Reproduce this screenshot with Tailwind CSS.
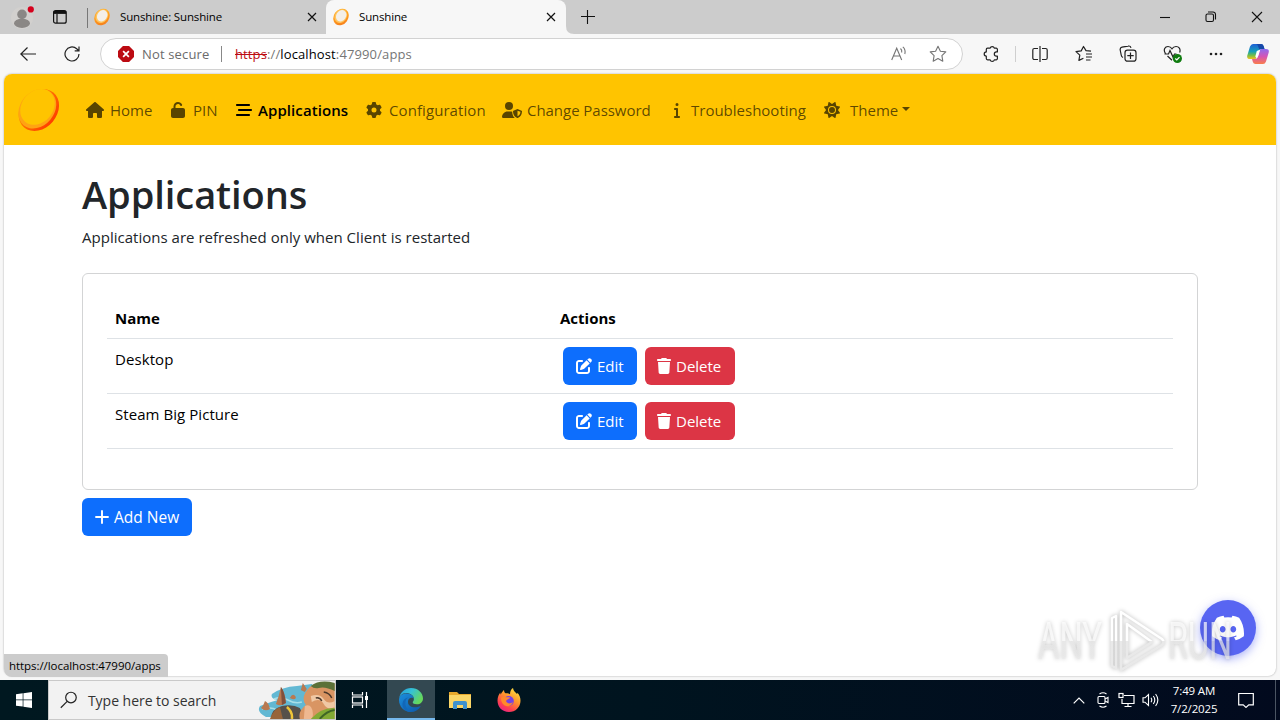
<!DOCTYPE html>
<html lang="en">
<head>
  <meta charset="UTF-8">
  <meta name="viewport" content="width=device-width, initial-scale=1.0">
  <title>Sunshine</title>
  <script src="https://cdn.jsdelivr.net/npm/@tailwindcss/browser@4"></script>
  <style>
    body {
      font-family: 'Open Sans', 'Noto Sans', sans-serif;
    }
  </style>
</head>
<body class="w-[1280px] h-[720px] overflow-hidden flex flex-col bg-[#f7f7f7] text-[15px] text-black">

  <!-- Shared icons -->
  <svg class="absolute w-0 h-0">
    <defs>
      <linearGradient id="sunRim" x1="0" y1="0" x2="1" y2="1">
        <stop offset="0" stop-color="#ffb52b"/><stop offset=".55" stop-color="#ff9a1e"/><stop offset="1" stop-color="#f2741b"/>
      </linearGradient>
      <linearGradient id="logoRim" x1="0" y1="0" x2="1" y2="0">
        <stop offset="0" stop-color="#ffa500"/><stop offset=".35" stop-color="#ff7a00"/><stop offset="1" stop-color="#ff3d00"/>
      </linearGradient>
      <symbol id="favicon" viewBox="0 0 16 18">
        <ellipse cx="8" cy="9" rx="7.2" ry="8.8" transform="rotate(35 8 9)" fill="url(#sunRim)"/>
        <ellipse cx="7.8" cy="8.1" rx="5.9" ry="7.2" transform="rotate(35 7.8 8.1)" fill="#ffc55e"/>
        <ellipse cx="8.2" cy="7.8" rx="4.9" ry="6" transform="rotate(35 8.2 7.8)" fill="#f4efe8"/>
      </symbol>
      <symbol id="edit" viewBox="0 0 512 512"><path d="M471.6 21.7c-21.9-21.9-57.3-21.9-79.2 0L362.3 51.7l97.9 97.9 30.1-30.1c21.9-21.9 21.9-57.3 0-79.2L471.6 21.7zm-299.2 220c-6.1 6.1-10.8 13.6-13.5 21.9l-29.6 88.8c-2.9 8.6-.6 18.1 5.8 24.6s15.9 8.7 24.6 5.8l88.8-29.6c8.2-2.7 15.7-7.4 21.9-13.5L437.7 172.3 339.7 74.3 172.4 241.7zM96 64C43 64 0 107 0 160V416c0 53 43 96 96 96H352c53 0 96-43 96-96V320c0-17.7-14.3-32-32-32s-32 14.3-32 32v96c0 17.7-14.3 32-32 32H96c-17.7 0-32-14.3-32-32V160c0-17.7 14.3-32 32-32h96c17.7 0 32-14.3 32-32s-14.3-32-32-32H96z"/></symbol>
      <symbol id="trash" viewBox="0 0 448 512"><path d="M135.2 17.7L128 32H32C14.3 32 0 46.3 0 64S14.3 96 32 96H416c17.7 0 32-14.3 32-32s-14.3-32-32-32H320l-7.2-14.3C307.4 6.8 296.3 0 284.2 0H163.8c-12.1 0-23.2 6.8-28.6 17.7zM416 128H32L53.2 467c1.6 25.3 22.6 45 47.9 45H346.9c25.3 0 46.3-19.7 47.9-45L416 128z"/></symbol>
    </defs>
  </svg>

  <!-- Tab strip -->
  <div class="h-[34px] shrink-0 flex bg-[#cccccc] text-[11.5px]">
    <div class="w-[88px] flex items-center">
      <svg class="w-6 h-[26px] ml-[11px]" viewBox="0 0 24 26">
        <circle cx="11" cy="14" r="11" fill="#d2d0ce"/>
        <circle cx="11" cy="10.4" r="4.8" fill="#8a8785"/>
        <ellipse cx="11" cy="19.3" rx="8" ry="4.6" fill="#8a8785"/>
        <circle cx="19.8" cy="5.4" r="3.1" fill="#d5001c"/>
      </svg>
      <svg class="w-4 h-4 ml-[17px]" viewBox="0 0 16 16" fill="none" stroke="#111" stroke-width="1.2">
        <rect x="1.6" y="1.6" width="12.6" height="12.6" rx="2"/>
        <path d="M5 5v9"/><path d="M1.6 3.4h12.6" stroke-width="3"/>
      </svg>
      <div class="w-px h-5 bg-[#777] ml-[19px] mt-px"></div>
    </div>
    <div class="w-[238px] flex items-center">
      <svg class="w-4 h-[18px] ml-[6px]"><use href="#favicon"/></svg>
      <span class="ml-[10px] w-[187px] tracking-[-0.15px]">Sunshine: Sunshine</span>
      <svg class="w-[10px] h-[10px]" viewBox="0 0 10 10" stroke="#111" stroke-width="1.2"><path d="M1 1l8 8M9 1l-8 8"/></svg>
    </div>
    <div class="w-[240px] flex items-center bg-[#f7f7f7] rounded-t-lg">
      <svg class="w-4 h-[18px] ml-[7px]"><use href="#favicon"/></svg>
      <span class="ml-[10px] w-[187px] tracking-[-0.15px]">Sunshine</span>
      <svg class="w-[10px] h-[10px]" viewBox="0 0 10 10" stroke="#111" stroke-width="1.2"><path d="M1 1l8 8M9 1l-8 8"/></svg>
    </div>
    <div class="flex-1 flex items-center">
      <svg class="self-end w-2 h-2" viewBox="0 0 8 8" fill="#f7f7f7"><path d="M0 0q0 8 8 8H0z"/></svg>
      <svg class="w-[14px] h-[14px] ml-[7px]" viewBox="0 0 14 14" stroke="#111" stroke-width="1.1"><path d="M6.500 0v14M0 6.500h14"/></svg>
      <svg class="w-[106px] h-[12px] ml-[564px]" viewBox="0 0 106 12" fill="none" stroke="#111" stroke-width="1.1">
        <path d="M1 6.5h10"/>
        <rect x="47" y="3" width="7.5" height="7.5" rx="1.5"/><path d="M49 1h5a2.5 2.5 0 0 1 2.5 2.5v5"/>
        <path d="M93 1l10 10M103 1l-10 10"/>
      </svg>
    </div>
  </div>

  <!-- Toolbar -->
  <div class="h-10 shrink-0 flex items-center text-[13px]">
    <svg class="w-4 h-4 ml-5" viewBox="0 0 16 16" fill="none" stroke="#222" stroke-width="1.2"><path d="M16 8H.8M7.5 1.5L.8 8l6.7 6.5"/></svg>
    <svg class="w-4 h-4 ml-7" viewBox="0 0 16 16" fill="none" stroke="#222" stroke-width="1.2"><path d="M15 8a7 7 0 1 1-2.3-5.2L14.6 4.6M15 .5v4.3h-4.3"/></svg>
    <div class="w-[863px] h-8 ml-5 flex items-center rounded-full border border-[#d2d2d2] bg-white">
      <svg class="w-[16px] h-[16px] ml-[17px]" viewBox="0 0 15 15"><path d="M4.6 0h5.8L15 4.6v5.8L10.4 15H4.6L0 10.4V4.6z" fill="#bc0b12"/><path d="M4.8 4.8l5.4 5.4M10.2 4.8l-5.4 5.4" stroke="#fff" stroke-width="1.6"/></svg>
      <span class="ml-[8px] mt-px w-[79px] text-[#6b6b6b] tracking-[0.15px]">Not secure</span>
      <div class="w-px h-4 bg-[#888]"></div>
      <span class="ml-[13px] mt-px w-[656px] text-[#767676] tracking-[0.12px]"><span class="text-[#bc0b12] line-through">https</span>://<span class="text-black">localhost</span>:47990/apps</span>
      <svg class="w-4 h-4" viewBox="0 0 16 16" fill="none" stroke="#757575" stroke-width="1.1"><path d="M.7 14L5.7 2.2 10.7 14M2.4 10h6.6M9.5 2.5q1.7 1.5 1.2 4M11.8.8q3.2 2.7 2 7.2"/></svg>
      <svg class="w-[18px] h-[18px] ml-[22px]" viewBox="0 0 18 18" fill="none" stroke="#757575" stroke-width="1.1" stroke-linejoin="round"><path d="M9 1.2l2.4 5 5.4.7-3.9 3.8.9 5.5L9 13.6l-4.8 2.6.9-5.5L1.2 6.9l5.4-.7z"/></svg>
    </div>
    <svg class="w-[18px] h-[18px] ml-5" viewBox="0 0 18 18" fill="none" stroke="#222" stroke-width="1.2" stroke-linejoin="round"><path d="M4.500 3.200h2.700a2.100 2.100 0 0 1 4.100 0H13.200a1.200 1.200 0 0 1 1.200 1.200v2.500h-1a2.100 2.100 0 0 0 0 4.200h1v2.500a1.200 1.200 0 0 1-1.200 1.200H11.300a2.100 2.100 0 0 1-4.100 0H4.500a1.200 1.200 0 0 1-1.200-1.200v-2.500a2.100 2.100 0 0 1 0-4.200V4.400a1.200 1.200 0 0 1 1.200-1.200z"/></svg>
    <div class="w-px h-4 bg-[#cfcfcf] ml-[14px]"></div>
    <svg class="w-4 h-4 ml-4" viewBox="0 0 16 16" fill="none" stroke="#222" stroke-width="1.2"><path d="M8 0v16M6 2.500H2.300A1.500 1.500 0 0 0 .8 4v8a1.500 1.500 0 0 0 1.500 1.500H6M10 2.500h3.700A1.500 1.500 0 0 1 15.200 4v8a1.500 1.500 0 0 1-1.500 1.500H10"/></svg>
    <svg class="w-[18px] h-[18px] ml-[27px]" viewBox="0 0 18 18" fill="none" stroke="#222" stroke-width="1.2" stroke-linejoin="round"><path d="M16 6.200l-5-.6L8.500 1.500 6.200 5.900 1 6.600l3.800 3.500-.9 5.300 4.500-2.200M11 9h6M11 12h6M11 15h4.500"/></svg>
    <svg class="w-[18px] h-[18px] ml-[26px]" viewBox="0 0 18 18" fill="none" stroke="#222" stroke-width="1.2"><path d="M4 12.500A3 3 0 0 1 2.200 10L1.200 5A2.500 2.500 0 0 1 3 2.200l6-1.100a2.500 2.500 0 0 1 3 1.800"/><rect x="6" y="5.200" width="11" height="11" rx="2.500"/><path d="M11.500 7.500v6.400M8.300 10.700h6.400"/></svg>
    <svg class="w-[20px] h-[20px] ml-[26px]" viewBox="0 0 20 20" fill="none" stroke="#222" stroke-width="1.2"><path d="M2.500 9.500C-.2 5.500 2.200 2.500 5 2.500c2.200 0 3.500 1.500 4 2.300.5-.8 1.800-2.300 4-2.300 2.800 0 5 2.500 3.600 6M9 16.300L4.500 12M1.500 10h4l1.500-3.500 3 6.500 1.500-3h2"/><circle cx="14.400" cy="14.500" r="4.600" fill="#107c10" stroke="none"/><path d="M12.300 14.500l1.500 1.500 2.700-2.900" stroke="#fff"/></svg>
    <svg class="w-[14px] h-1 ml-[26px]" viewBox="0 0 14 4" fill="#222"><circle cx="2" cy="2" r="1.3"/><circle cx="7" cy="2" r="1.3"/><circle cx="12" cy="2" r="1.3"/></svg>
    <svg class="w-[22px] h-5 ml-6" viewBox="0 0 22 20">
      <defs>
        <linearGradient id="cpA" x1="0" y1="0" x2="0" y2="1"><stop offset="0" stop-color="#1f5fd6"/><stop offset=".5" stop-color="#16a0b8"/><stop offset=".75" stop-color="#6fbe4a"/><stop offset="1" stop-color="#f2c11f"/></linearGradient>
        <linearGradient id="cpB" x1="0" y1="0" x2="0" y2="1"><stop offset="0" stop-color="#8d6cf0"/><stop offset=".5" stop-color="#d555b4"/><stop offset="1" stop-color="#fa7d4a"/></linearGradient>
      </defs>
      <path d="M6 0h8q2 0 2.600 2l.9 3h-3q-2 0-2.600 2l-2 6.500Q9.200 15 7.500 15H3Q-.5 15 .3 11.500L3 2.500Q4 0 6 0z" fill="url(#cpA)"/>
      <path d="M16 20H8.500q-2 0-2.600-2L5 15h3q2 0 2.600-2l2-6.500Q13 5 14.500 5H19q3.500 0 2.700 3.500l-2.700 9Q18 20 16 20z" fill="url(#cpB)"/>
      <path d="M14 0q2 0 2.600 2l.9 3h-3q-1.400 0-2 1L11 2q-.5-2-2-2z" fill="#1748a8"/>
      <path d="M9.800 7l3.400-1.500-1.700 6-1.700 3-1.500-2z" fill="#fff"/>
    </svg>
  </div>

  <!-- Web page -->
  <div class="relative w-[1272px] h-[602px] mx-1 mb-1 shrink-0 rounded-lg bg-white shadow-[0_0_2px_rgba(0,0,0,0.35)]">
    <nav class="h-[71px] flex items-center rounded-t-lg bg-[#ffc400] text-black/65 fill-[#594500]">
      <svg class="w-[46px] h-[46px] ml-3" viewBox="0 0 46 46">
        <ellipse cx="22.8" cy="23" rx="18.200" ry="22.8" transform="rotate(40 22.8 23)" fill="url(#logoRim)"/>
        <ellipse cx="21.3" cy="21.8" rx="17" ry="21.4" transform="rotate(40 21.3 21.8)" fill="#ffa313"/>
        <ellipse cx="21.5" cy="19.9" rx="15.600" ry="19.4" transform="rotate(40 21.5 19.9)" fill="#ffc400"/>
      </svg>
      <a class="w-[85px] ml-6 flex items-center">
        <svg class="w-[18px] h-4" viewBox="0 0 576 512"><path d="M575.8 255.500c0 18-15 32.100-32 32.100h-32l.7 160.200c0 2.700-.2 5.400-.5 8.100V472c0 22.100-17.900 40-40 40H392c-22.100 0-40-17.900-40-40V384c0-17.700-14.300-32-32-32H256c-17.700 0-32 14.300-32 32v88c0 22.100-17.900 40-40 40H104c-22.100 0-40-17.900-40-40V287.600H32c-18 0-32-14-32-32.100c0-9 3-17 10-24L266.400 8c7-7 15-8 22-8s15 2 21 7L564.800 231.500c8 7 12 15 11 24z"/></svg>
        <span class="ml-[6px] mt-[2px]">Home</span>
      </a>
      <a class="w-[65px] flex items-center">
        <svg class="w-[14px] h-4" viewBox="0 0 448 512"><path d="M144 144c0-44.200 35.800-80 80-80c31.900 0 59.400 18.600 72.300 45.700c7.600 16 26.700 22.800 42.600 15.200s22.800-26.700 15.200-42.600C331 33.700 281.500 0 224 0C144.500 0 80 64.500 80 144v48H64c-35.300 0-64 28.700-64 64V448c0 35.300 28.700 64 64 64H384c35.300 0 64-28.700 64-64V256c0-35.300-28.700-64-64-64H144V144z"/></svg>
        <span class="ml-2 mt-[2px]">PIN</span>
      </a>
      <a class="w-[130px] flex items-center text-black fill-black">
        <svg class="w-4 h-4" viewBox="0 0 512 512"><path d="M0 96C0 78.300 14.300 64 32 64H416c17.700 0 32 14.300 32 32s-14.300 32-32 32H32C14.300 128 0 113.700 0 96zM64 256c0-17.700 14.300-32 32-32H480c17.700 0 32 14.300 32 32s-14.300 32-32 32H96c-17.700 0-32-14.300-32-32zM448 416c0 17.700-14.300 32-32 32H32c-17.700 0-32-14.300-32-32s14.300-32 32-32H416c17.700 0 32 14.300 32 32z"/></svg>
        <span class="ml-[6px] mt-[2px] font-semibold tracking-[0.08px]">Applications</span>
      </a>
      <a class="w-[136px] flex items-center">
        <svg class="w-4 h-4" viewBox="0 0 512 512"><path d="M495.900 166.600c3.200 8.700 .5 18.400-6.400 24.600l-43.300 39.400c1.100 8.300 1.700 16.800 1.700 25.400s-.6 17.100-1.700 25.400l43.300 39.400c6.900 6.200 9.600 15.900 6.400 24.600c-4.400 11.900-9.700 23.300-15.800 34.300l-4.700 8.100c-6.600 11-14 21.400-22.100 31.200c-5.900 7.200-15.700 9.600-24.500 6.800l-55.700-17.700c-13.400 10.300-28.200 18.900-44 25.400l-12.500 57.100c-2 9.100-9 16.300-18.200 17.800c-13.800 2.300-28 3.500-42.500 3.500s-28.700-1.200-42.500-3.500c-9.200-1.500-16.200-8.700-18.200-17.800l-12.500-57.100c-15.800-6.500-30.600-15.100-44-25.400L83.100 425.900c-8.800 2.800-18.600 .3-24.500-6.800c-8.100-9.800-15.500-20.200-22.100-31.200l-4.700-8.100c-6.100-11-11.400-22.400-15.800-34.300c-3.200-8.700-.5-18.400 6.400-24.600l43.300-39.400C64.600 273.100 64 264.600 64 256s.6-17.100 1.700-25.400L22.400 191.200c-6.900-6.200-9.600-15.900-6.400-24.600c4.400-11.900 9.700-23.300 15.800-34.300l4.700-8.100c6.600-11 14-21.400 22.100-31.200c5.900-7.200 15.700-9.600 24.500-6.800l55.700 17.700c13.400-10.300 28.200-18.900 44-25.400l12.500-57.100c2-9.100 9-16.300 18.200-17.800C227.300 1.200 241.500 0 256 0s28.700 1.200 42.500 3.500c9.200 1.500 16.200 8.700 18.200 17.800l12.500 57.100c15.800 6.500 30.600 15.100 44 25.400l55.700-17.700c8.800-2.800 18.600-.3 24.500 6.800c8.100 9.800 15.500 20.200 22.100 31.200l4.700 8.100c6.100 11 11.400 22.400 15.800 34.300zM256 336a80 80 0 1 0 0-160 80 80 0 1 0 0 160z"/></svg>
        <span class="ml-[7px] mt-[2px] tracking-[0.08px]">Configuration</span>
      </a>
      <a class="w-[170px] flex items-center">
        <svg class="w-5 h-4" viewBox="0 0 640 512"><circle cx="224" cy="128" r="128"/><path d="M178.300 304h91.400c20 0 39 3.300 57 9.300C328 390 350 465 410 508q-6 4-12 4H29.700C13.300 512 0 498.700 0 482.300C0 383.800 79.800 304 178.300 304z"/><path fill-rule="evenodd" d="M496 226l131 51q13 6 13 19c0 92-36 174-132 214q-12 5-24 0C388 470 352 388 352 296q0-13 13-19zM496 277v181c60-30 92-80 95-144z"/></svg>
        <span class="ml-[5px] mt-[2px] tracking-[-0.04px]">Change Password</span>
      </a>
      <a class="w-[152px] flex items-center">
        <svg class="w-[6px] h-4 ml-[2px]" viewBox="0 0 192 512"><path d="M48 80a48 48 0 1 1 96 0A48 48 0 1 1 48 80zM0 224c0-17.700 14.300-32 32-32H96c17.700 0 32 14.300 32 32V448h32c17.700 0 32 14.300 32 32s-14.300 32-32 32H32c-17.700 0-32-14.300-32-32s14.300-32 32-32H64V256H32c-17.700 0-32-14.300-32-32z"/></svg>
        <span class="ml-[11px] mt-[2px]">Troubleshooting</span>
      </a>
      <a class="flex items-center">
        <svg class="w-4 h-4" viewBox="0 0 512 512"><path d="M361.500 1.200c5 2.100 8.600 6.600 9.600 11.900L391 121l107.900 19.800c5.300 1 9.800 4.600 11.900 9.600s1.500 10.700-1.600 15.200L446.900 256l62.300 90.300c3.100 4.500 3.700 10.200 1.600 15.200s-6.600 8.600-11.900 9.600L391 391 371.100 498.900c-1 5.300-4.600 9.800-9.600 11.900s-10.700 1.500-15.200-1.600L256 446.900l-90.300 62.300c-4.500 3.100-10.200 3.700-15.200 1.600s-8.600-6.600-9.600-11.900L121 391 13.100 371.100c-5.300-1-9.800-4.600-11.900-9.600s-1.500-10.700 1.600-15.200L65.100 256 2.800 165.700c-3.100-4.500-3.700-10.200-1.600-15.200s6.600-8.600 11.900-9.600L121 121 140.900 13.100c1-5.300 4.600-9.800 9.600-11.900s10.700-1.500 15.200 1.600L256 65.100 346.300 2.800c4.500-3.100 10.200-3.700 15.200-1.600zM160 256a96 96 0 1 1 192 0 96 96 0 1 1 -192 0zm224 0a128 128 0 1 0 -256 0 128 128 0 1 0 256 0z"/></svg>
        <span class="ml-[10px] mt-[2px] w-[52px]">Theme</span>
        <svg class="w-2 h-1 mb-[2px]" viewBox="0 0 8 4"><path d="M0 0h8L4 4z"/></svg>
      </a>
    </nav>

    <main class="px-[78px] pt-6">
      <h1 class="h-12 leading-[50px] text-[38px] font-semibold tracking-[-0.06px] text-[#212529]">Applications</h1>
      <p class="mt-2 h-6 leading-6 text-[#212529] tracking-[0.02px]">Applications are refreshed only when Client is restarted</p>
      <div class="h-[217px] mt-6 px-6 pt-6 border border-[#d3d4d5] rounded-md">
        <table class="w-full table-fixed">
          <thead>
            <tr class="h-[40px] border-b border-[#dee2e6] text-left align-middle">
              <th class="w-[445px] px-2 pt-px font-bold">Name</th>
              <th class="px-2 pt-px font-bold">Actions</th>
            </tr>
          </thead>
          <tbody>
            <tr class="h-[55px] border-b border-[#dee2e6]">
              <td class="px-2 pt-2 align-top leading-6 tracking-[0.08px]">Desktop</td>
              <td class="px-2">
                <div class="flex gap-2 ml-[3px] text-white fill-white">
                  <button class="w-[74px] h-[38px] pl-[13px] flex items-center rounded-md bg-[#0d6efd]"><svg class="w-4 h-4 mr-[5px]"><use href="#edit"/></svg><span class="mt-[2px]">Edit</span></button>
                  <button class="w-[90px] h-[38px] pl-[12px] flex items-center rounded-md bg-[#dc3545]"><svg class="w-[14px] h-4 mr-[5px]"><use href="#trash"/></svg><span class="mt-[2px]">Delete</span></button>
                </div>
              </td>
            </tr>
            <tr class="h-[55px] border-b border-[#dee2e6]">
              <td class="px-2 pt-2 align-top leading-6 tracking-[0.06px]">Steam Big Picture</td>
              <td class="px-2">
                <div class="flex gap-2 ml-[3px] text-white fill-white">
                  <button class="w-[74px] h-[38px] pl-[13px] flex items-center rounded-md bg-[#0d6efd]"><svg class="w-4 h-4 mr-[5px]"><use href="#edit"/></svg><span class="mt-[2px]">Edit</span></button>
                  <button class="w-[90px] h-[38px] pl-[12px] flex items-center rounded-md bg-[#dc3545]"><svg class="w-[14px] h-4 mr-[5px]"><use href="#trash"/></svg><span class="mt-[2px]">Delete</span></button>
                </div>
              </td>
            </tr>
          </tbody>
        </table>
      </div>
      <button class="w-[110px] h-[38px] mt-2 pl-[13px] flex items-center rounded-md bg-[#0d6efd] text-white text-[15.5px] whitespace-nowrap">
        <svg class="w-[14px] h-[14px] mr-[5px]" viewBox="0 0 14 14" stroke="#fff" stroke-width="1.9" stroke-linecap="round"><path d="M7 1v12M1 7h12"/></svg><span class="mt-[2px]">Add New</span>
      </button>
    </main>

    <!-- Discord button -->
    <div class="absolute left-[1196px] top-[526px] w-14 h-14 flex items-center justify-center rounded-full bg-[#5865f2] shadow-[0_3px_10px_rgba(88,101,242,0.5)]">
      <svg class="w-8 h-8" viewBox="0 0 16 16" fill="#fff"><path d="M13.545 2.907a13.200 13.200 0 0 0-3.257-1.011.05.05 0 0 0-.052.025c-.141.25-.297.577-.406.833a12.200 12.200 0 0 0-3.658 0 8 8 0 0 0-.412-.833.05.05 0 0 0-.052-.025c-1.125.194-2.220.534-3.257 1.011a.04.04 0 0 0-.021.018C.356 6.024-.213 9.047.066 12.032q.003.022.021.037a13.300 13.300 0 0 0 3.995 2.020.05.05 0 0 0 .056-.019q.463-.63.818-1.329a.05.05 0 0 0-.01-.059l-.018-.011a9 9 0 0 1-1.248-.595.05.05 0 0 1-.02-.066l.015-.019q.127-.095.248-.195a.05.05 0 0 1 .051-.007c2.619 1.196 5.454 1.196 8.041 0a.05.05 0 0 1 .053.007q.121.1.248.195a.05.05 0 0 1-.004.085 8 8 0 0 1-1.249.594.05.05 0 0 0-.03.03.05.05 0 0 0 .003.041c.24.465.515.909.817 1.329a.05.05 0 0 0 .056.019 13.200 13.200 0 0 0 4.001-2.020.05.05 0 0 0 .021-.037c.334-3.451-.559-6.449-2.366-9.106a.03.03 0 0 0-.02-.019m-8.198 7.307c-.789 0-1.438-.724-1.438-1.612s.637-1.613 1.438-1.613c.807 0 1.450.73 1.438 1.613 0 .888-.637 1.612-1.438 1.612m5.316 0c-.788 0-1.438-.724-1.438-1.612s.637-1.613 1.438-1.613c.807 0 1.451.73 1.438 1.613 0 .888-.631 1.612-1.438 1.612"/></svg>
    </div>

    <!-- Watermark -->
    <svg class="absolute left-[1026px] top-[530px] w-[230px] h-[76px] drop-shadow-[0_0_2px_rgba(0,0,0,0.3)]" viewBox="0 0 230 76" font-family="Roboto, sans-serif" font-size="51" font-weight="400">
      <defs><linearGradient id="wm" x1="0" y1="0" x2="0" y2="1"><stop offset=".5" stop-color="#fff"/><stop offset=".5" stop-color="#e9e9e9"/></linearGradient></defs>
      <g fill="url(#wm)" fill-opacity=".7">
        <text x="8" y="55" textLength="64" lengthAdjust="spacingAndGlyphs">ANY</text>
        <text x="138" y="55" textLength="64" lengthAdjust="spacingAndGlyphs">RUN</text>
      </g>
      <path d="M82 62V14l4-2v52zM91 8l41 27q3 3 0 6L91 66zM97 20v34l25-16z" fill="none" stroke="url(#wm)" stroke-width="2.5" stroke-linejoin="round"/>
    </svg>

    <!-- Link status bubble -->
    <div class="absolute left-0 top-[580px] w-[164px] h-[23px] pl-[5px] leading-[23px] rounded-tr-[4px] rounded-bl-lg bg-[#cccccc] text-[11.5px] tracking-[-0.06px]">https://localhost:47990/apps</div>
  </div>

  <!-- Taskbar -->
  <div class="h-10 shrink-0 flex items-center bg-gradient-to-r from-[#001820] via-[#00141f] to-[#020a1e] text-white">
    <div class="w-12 flex justify-center">
      <svg class="w-4 h-4" viewBox="0 0 16 16" fill="#fff"><path d="M0 2.300L6.700 1.300v6.300H0zM7.400 1.200L16 0v7.600H7.400zM0 8.300h6.700v6.300L0 13.700zM7.400 8.300H16V16l-8.600-1.200z"/></svg>
    </div>
    <div class="w-[288px] h-full flex items-center bg-[#f2f2f2] border border-[#c9c9c9] text-[#333] text-[14px]">
      <svg class="w-[18px] h-[18px] ml-[11px]" viewBox="0 0 18 18" fill="none" stroke="#222" stroke-width="1.2"><circle cx="11" cy="6.5" r="5.3"/><path d="M7.2 10.3L.8 16.8"/></svg>
      <span class="ml-[10px] mt-px w-[171px] tracking-[-0.03px]">Type here to search</span>
      <svg class="w-[77px] h-[38px]" viewBox="0 0 77 38">
        <path d="M14 13q10-7 25-8l15-2 12 12-20 21H8Q-2 31 2 25q10-4 18-6-8-1-6-6z" fill="#62b8d3"/>
        <path d="M16 18q7-3 14 1t14 2M4 28q8-3 17 2" stroke="#a8dfe8" stroke-width="1.5" fill="none"/>
        <path d="M18 23q3-7 5-17 4 5 5 16-5 4-10 1zM3 27q3-3 4-7 4 2 5 8-5 3-9-1zM43 9l2-7 4 6-2 3zM32 17q3-6 6-1 0 4-6 1z" fill="#b97950"/>
        <path d="M23 6q4 5 5 16l-4 2z" fill="#80503c"/>
        <path d="M13 38q0-10 11-13 11-2 18 2l5 11z" fill="#56504a"/>
        <path d="M12 38q3-9 10-12l3 12z" fill="#97643a"/>
        <path d="M29 26q6 5 5 12" stroke="#efc538" stroke-width="2.500" fill="none"/>
        <path d="M52 6Q62-2 77 3v35H42q-2-8 6-14-6-8 4-18z" fill="#d99563"/>
        <path d="M53 5q9-7 24-3v8q-10-5-16-3-5 1-8-2z" fill="#5c7138"/>
        <path d="M53 15q9-3 13 3t11 2v6q-7 4-11-3t-12-2z" fill="#f0c8a4"/>
        <path d="M58 17q4-1 6 3M66 11q6 1 8 6" stroke="#4b382b" stroke-width="1.5" fill="none"/>
        <path d="M47 25q7-3 8 7t-9 6z" fill="#efb890"/>
        <path d="M53 38q11-12 24-11v11z" fill="#82a934"/>
        <path d="M62 38q7-8 15-9" stroke="#3f6526" stroke-width="2" fill="none"/>
      </svg>
    </div>
    <div class="w-[51px] flex justify-center">
      <svg class="w-[18px] h-[18px] mr-[3px]" viewBox="0 0 18 18" fill="none" stroke="#fff" stroke-width="1.2"><path d="M1.500 1v3h10V1M1.500 17v-3h10v3M15.500 1v16"/><rect x="1.500" y="6" width="10" height="6"/><path d="M15.500 5v4" stroke-width="3"/></svg>
    </div>
    <div class="w-12 h-full flex items-center justify-center bg-[#334851] border-b-2 border-[#76b9ed]">
      <svg class="w-6 h-6 mt-[2px]" viewBox="0 0 24 24">
        <defs>
          <linearGradient id="edgeTop" x1="0" y1="0" x2="1" y2=".5"><stop offset="0" stop-color="#2299dc"/><stop offset=".5" stop-color="#35c1d6"/><stop offset="1" stop-color="#66d85c"/></linearGradient>
          <linearGradient id="edgeBody" x1="0" y1="0" x2="1" y2="1"><stop offset="0" stop-color="#1b8fdd"/><stop offset="1" stop-color="#0d56a8"/></linearGradient>
        </defs>
        <path d="M0 11C1 4 6 0 12 0c7 0 12 5 12 10.500 0 3.500-2.800 5.800-6 5.800-3 0-4.300-1-4.300-2 0-.8 1.200-1.200 1.200-3.300C14.900 7.500 11 5 7.500 5 3 5 .5 8 0 11z" fill="url(#edgeTop)"/>
        <path d="M0 12c0-4.500 4-6.500 7.500-6.500 4.300 0 7 2.500 7.300 5-1-1.500-5.800-1.500-5.800 3.500 0 4.500 5.500 7 12.800 4C19.500 22 16 24 12 24 5 24 0 18.500 0 12z" fill="url(#edgeBody)"/>
        <path d="M7 12c-2 6 1.500 11 6 12-6 .5-10-4-9.500-8.500C4 12 6 10 10 9.300 8.500 10 7.400 10.800 7 12z" fill="#1267b8"/>
      </svg>
    </div>
    <div class="w-[49px] flex justify-center">
      <svg class="w-[22px] h-[18px]" viewBox="0 0 22 18"><path d="M0 1h8l2 2h12v14H0z" fill="#e8a92c"/><path d="M0 4h22v13H0z" fill="#fbd667"/><path d="M4 18v-6q0-2 2-2h10q2 0 2 2v6h-4v-4H8v4z" fill="#3e92d0"/></svg>
    </div>
    <div class="w-[49px] flex justify-center">
      <svg class="w-6 h-6" viewBox="0 0 24 24">
        <defs><linearGradient id="fox" x1=".8" y1="0" x2=".2" y2="1"><stop offset="0" stop-color="#ffe443"/><stop offset=".4" stop-color="#ff982c"/><stop offset=".75" stop-color="#ff4050"/><stop offset="1" stop-color="#e5208b"/></linearGradient></defs>
        <path d="M12 24C5 24 .5 19 .5 12.500.5 9 2 6 3.300 4.500c0 1 .2 1.500.5 2C4.500 4.500 6 3 7 2c0 1.500.5 2.500 1.500 3.300 1.500-.3 3.500.2 4.500.9 0-2.700 1-5 3-6.200.3 3 2.500 4 4 6 .3-.2.4-.7.4-1.300 2.200 2 3.100 5 3.100 8C23.500 19 18.500 24 12 24z" fill="url(#fox)"/>
        <circle cx="11.800" cy="13" r="5" fill="#7542e5"/>
        <path d="M4 10c2-2 4-.8 5-.8h4c0 1.800-3 1.800-4 3.800 1 3 5 3 7 1-1 3-4 5-7 4-3-1-5-4-5-8z" fill="#ff8a2b"/>
      </svg>
    </div>
    <div class="flex-1"></div>
    <svg class="w-3 h-[7px] mr-[12px]" viewBox="0 0 12 7" fill="none" stroke="#fff" stroke-width="1.2"><path d="M.7 6.3L6 1l5.3 5.3"/></svg>
    <svg class="w-3 h-4 mr-[9px]" viewBox="0 0 12 16" fill="none" stroke="#fff" stroke-width="1.1"><rect x="1" y="4.5" width="7" height="7" rx="1"/><path d="M8 7l3-1.500v5L8 9M2.500 2q3.500-2.500 7 0M2.500 14q3.500 2.500 7 0"/></svg>
    <svg class="w-[17px] h-4 mr-[7px]" viewBox="0 0 17 16" fill="none" stroke="#fff" stroke-width="1.2"><path d="M6 3.500h10v8H4V7M10 11.500v3M6.500 14.500h7"/><rect x="1" y="1.500" width="4" height="4"/></svg>
    <svg class="w-[17px] h-4 mr-[11px]" viewBox="0 0 17 16" fill="none" stroke="#fff" stroke-width="1.1"><path d="M1 5.800h2L6.500 2.500v11L3 10.200H1zM9 5.800q1.500 2.200 0 4.400M11.300 4q3 4 0 8M13.600 2q4.500 6 0 12"/></svg>
    <div class="w-[48px] text-[11.5px] leading-[18px] text-center whitespace-nowrap flex flex-col items-center tracking-[-0.15px]"><span>7:49 AM</span><span>7/2/2025</span></div>
    <svg class="w-4 h-4 ml-[20px] mr-[21px]" viewBox="0 0 16 16" fill="none" stroke="#fff" stroke-width="1.2"><path d="M.7 1.500h14.600v11.300h-4.500L8 15.400l-2.800-2.600H.7z"/></svg>
    <div class="w-px h-full bg-[#4b5563] mr-1"></div>
  </div>

</body>
</html>
